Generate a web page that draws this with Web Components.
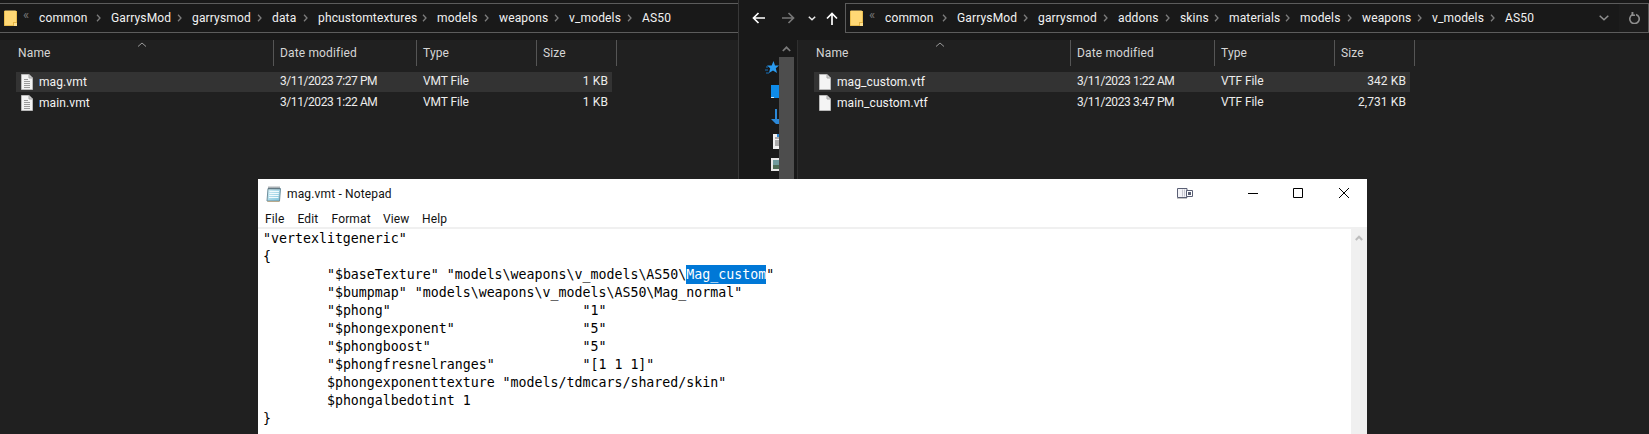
<!DOCTYPE html>
<html><head><meta charset="utf-8">
<style>
html,body{margin:0;padding:0;background:#202020;overflow:hidden}
body{width:1649px;height:434px;position:relative;font-family:Roboto,"Noto Sans",sans-serif;font-size:12px}
</style></head><body>
<desk-top>
  <explorer-window style="--x:0px;--win:738px;--start:12px;--c1:262px;--c2:143px;--c3:120px;--c4:80px;--caret:125px;">
    <crumb-bar slot="bar">
      <bread-crumb style="--w:72px">common</bread-crumb>
      <bread-crumb style="--w:81px">GarrysMod</bread-crumb>
      <bread-crumb style="--w:80px">garrysmod</bread-crumb>
      <bread-crumb style="--w:46px">data</bread-crumb>
      <bread-crumb style="--w:119px">phcustomtextures</bread-crumb>
      <bread-crumb style="--w:62px">models</bread-crumb>
      <bread-crumb style="--w:70px">weapons</bread-crumb>
      <bread-crumb style="--w:73px">v_models</bread-crumb>
      <bread-crumb last>AS50</bread-crumb>
    </crumb-bar>
    <file-row hl lines name="mag.vmt" date="3/11/2023 7:27 PM" type="VMT File" size="1 KB"></file-row>
    <file-row lines name="main.vmt" date="3/11/2023 1:22 AM" type="VMT File" size="1 KB"></file-row>
  </explorer-window>
  <explorer-window nav style="--x:738px;--win:911px;--start:12px;--c1:261px;--c2:144px;--c3:120px;--c4:80px;--caret:125px;">
    <nav-buttons slot="nav"></nav-buttons>
    <crumb-bar slot="bar" boxed>
      <bread-crumb style="--w:72px">common</bread-crumb>
      <bread-crumb style="--w:81px">GarrysMod</bread-crumb>
      <bread-crumb style="--w:80px">garrysmod</bread-crumb>
      <bread-crumb style="--w:62px">addons</bread-crumb>
      <bread-crumb style="--w:49px">skins</bread-crumb>
      <bread-crumb style="--w:71px">materials</bread-crumb>
      <bread-crumb style="--w:62px">models</bread-crumb>
      <bread-crumb style="--w:70px">weapons</bread-crumb>
      <bread-crumb style="--w:73px">v_models</bread-crumb>
      <bread-crumb last>AS50</bread-crumb>
      <addr-tools></addr-tools>
    </crumb-bar>
    <nav-pane slot="pane"></nav-pane>
    <file-row hl name="mag_custom.vtf" date="3/11/2023 1:22 AM" type="VTF File" size="342 KB"></file-row>
    <file-row name="main_custom.vtf" date="3/11/2023 3:47 PM" type="VTF File" size="2,731 KB"></file-row>
  </explorer-window>
  <notepad-window title="mag.vmt - Notepad"></notepad-window>
</desk-top>
<script>
const make=(name,html)=>customElements.define(name,class extends HTMLElement{
  constructor(){super();this.attachShadow({mode:'open'});}
  connectedCallback(){ this.shadowRoot.innerHTML=typeof html==='function'?html(this):html; }
});
const chev='<svg width="5" height="8" viewBox="0 0 5 8"><path d="M1 .8 4 4 1 7.2" fill="none" stroke="#7d7d7d" stroke-width="1.3"/></svg>';
const folder='<svg width="13" height="16" viewBox="0 0 13 16"><path d="M0 1.5 .8.5H11.5l1 1V16H.8L0 15Z" fill="#ffd875"/><path d="M.5 1v14.5h12V1" fill="none" stroke="#e9bd4f"/><path d="M9 12h4v4H9Z" fill="#e4b445"/><path d="M10 13h3v3h-3Z" fill="#ffe08e"/></svg>';

make('desk-top',`<style>:host{display:block;position:relative;width:1649px;height:434px;overflow:hidden;background:#202020;color:#fff}</style><slot></slot>`);

make('bread-crumb',h=>`<style>:host{display:inline-flex;align-items:center;justify-content:space-between;width:var(--w,auto);flex:none;color:#f2f2f2;letter-spacing:.15px;white-space:nowrap;line-height:16px}svg{margin-right:10px;flex:none}</style><span><slot></slot></span>${h.hasAttribute('last')?'':chev}`);

make('addr-tools',`<style>
:host{margin-left:auto;display:flex;align-items:center;height:28px;flex:none}
.dd{width:30px;display:flex;justify-content:center;align-items:center}
.rf{width:29px;height:28px;background:#1c1c1c;display:flex;align-items:center;justify-content:center}
</style><span class="dd"><svg width="10" height="6" viewBox="0 0 10 6"><path d="M.7.7 5 4.800 9.300.7" fill="none" stroke="#8f8f8f" stroke-width="1.500"/></svg></span><span class="rf"><svg width="12" height="12" viewBox="0 0 12 12"><path d="M4.500 2.600A4.700 4.700 0 1 0 8 2.400" fill="none" stroke="#8f8f8f" stroke-width="1.600"/><path d="M3.500 0H5.400V4H3.500Z M3.500 2.600H7V4H3.500Z" fill="#8f8f8f"/></svg></span>`);

make('crumb-bar',h=>`<style>
:host{display:flex;align-items:center;height:28px;border:solid #5c5c5c;border-width:1px 0;flex:1;min-width:0;overflow:hidden}
:host([boxed]){border-width:1px}
.ic{display:flex;margin-left:4px;flex:none}
.lq{color:#777;width:16px;flex:none;font-size:13px;margin-left:6px;line-height:10px;padding-bottom:7px}
</style><span class="ic">${folder}</span><span class="lq">«</span><slot></slot>`);

make('nav-buttons',`<style>:host{display:flex;align-items:center;width:106px;flex:none;height:30px;position:relative;padding-left:13px;box-sizing:border-box}
svg{display:block;flex:none}</style>
<svg width="13" height="12" viewBox="0 0 13 12" style="margin-right:17px"><path d="M13 6H2M6.500 1 1.500 6l5 5" fill="none" stroke="#fff" stroke-width="1.7"/></svg>
<svg width="13" height="12" viewBox="0 0 13 12" style="margin-right:13px"><path d="M0 6h11M6.500 1l5 5-5 5" fill="none" stroke="#777" stroke-width="1.7"/></svg>
<svg width="8" height="5" viewBox="0 0 8 5" style="margin-right:10px"><path d="M.8.7 4 3.800 7.200.7" fill="none" stroke="#e8e8e8" stroke-width="1.500"/></svg>
<svg width="12" height="13" viewBox="0 0 12 13"><path d="M6 13V2M1 6.500l5-5 5 5" fill="none" stroke="#fff" stroke-width="1.7"/></svg>`);

make('nav-pane',`<style>:host{display:flex;width:58px;height:100%;flex:none;background:#191919;border-right:1px solid #2f2f2f}
.rail{width:40px;overflow:hidden;display:flex;flex-direction:column;align-items:flex-end;padding-top:21px;box-sizing:border-box;flex:none}
.it{height:24.2px;flex:none;position:relative;width:14px;overflow:hidden}
.it svg{position:absolute;left:0;top:0}
.sb{width:15px;flex:none;display:flex;flex-direction:column}
.up{height:17px;display:flex;align-items:center;justify-content:center}
.th{flex:1;background:#4d4d4d}
</style>
<div class="rail">
<div class="it"><svg width="14" height="14" viewBox="0 0 14 14"><path d="M8.500 0 10 4.400l4 .2-3.200 2.600L12 12 8 9.400 4 12l1.200-4.800L2 4.600l4.700-.2Z" fill="#2a9bf0"/><path d="M0 9h3M1 6h2M1 12h3" stroke="#1670bb"/></svg></div>
<div class="it"><svg width="14" height="14" viewBox="0 0 14 14"><path d="M6 0h8v13H6Z" fill="#0f8ce9"/><path d="M6 12h3v1H6Z" fill="#cfe7fa"/></svg></div>
<div class="it"><svg width="14" height="15" viewBox="0 0 14 15"><path d="M12 0v10h2v5h-3L6 10h4V0Z" fill="#2b88d8"/></svg></div>
<div class="it"><svg width="14" height="15" viewBox="0 0 14 15"><path d="M8 0h6v15H8Z" fill="#f0f0f0"/><path d="M10 4h4M10 7h4M10 9h4M10 11h4" stroke="#666"/><path d="M12 0h2v3h-2Z" fill="#2b88d8"/></svg></div>
<div class="it"><svg width="14" height="13" viewBox="0 0 14 13"><path d="M6 0h8v13H6Z" fill="#e8e8e8"/><path d="M8 2h6v9H8Z" fill="#6f9a9c"/><path d="M8 7h6v4H8Z" fill="#4d6c55"/></svg></div>
</div>
<div class="sb"><div class="up"><svg width="9" height="6" viewBox="0 0 9 6"><path d="M.8 5 4.500 1.300 8.200 5" fill="none" stroke="#7a7a7a" stroke-width="1.700"/></svg></div><div class="th"></div></div>`);

make('file-row',h=>{const a=k=>h.getAttribute(k);return `<style>
:host{display:grid;grid-template-columns:calc(var(--c1) - 4px) var(--c2) var(--c3) calc(var(--c4) - 5px);height:20px;margin:0 0 1px 4px;width:max-content;line-height:19px;color:#ececec;white-space:nowrap;letter-spacing:.1px}
:host([hl]){background:#333}
.n{display:flex;align-items:center;gap:6px;padding-left:5px;color:#f4f4f4}
.c{padding-left:6px}.s{text-align:right;padding-right:4px}
.d{letter-spacing:-.42px}.ty{letter-spacing:-.1px}
svg{flex:none;display:block}
</style><div class="n"><svg width="12" height="16" viewBox="0 0 12 16"><path d="M.5.5H8L11.500 4V15.500H.5Z" fill="#f4f4f4" stroke="#b9b9b9"/><path d="M8 .5V4H11.500" fill="#d0d0d0" stroke="#a8a8a8"/>${h.hasAttribute('lines')?'<path d="M3 5.500H7M3 7.500H9M3 9.500H9M3 11.500H9M3 13.500H9" stroke="#9a9a9a"/>':''}</svg><span>${a('name')}</span></div><div class="c d">${a('date')}</div><div class="c ty">${a('type')}</div><div class="s">${a('size')}</div>`});

make('col-head',`<style>
:host{display:grid;grid-template-columns:var(--c1) var(--c2) var(--c3) var(--c4);height:25px;width:max-content;position:relative;color:#d6d6d6;letter-spacing:.15px}
div{border-right:1px solid #555;padding-left:6px;line-height:26px;box-sizing:border-box}
svg{position:absolute;left:var(--caret);top:2px}
</style><div>Name</div><div>Date modified</div><div>Type</div><div>Size</div><svg width="10" height="5" viewBox="0 0 10 5"><path d="M1 4.500 5 1l4 3.500" fill="none" stroke="#999" stroke-width="1"/></svg>`);

make('explorer-window',h=>`<style>
:host{position:absolute;left:var(--x);top:0;width:var(--win);height:434px;background:#202020;box-sizing:border-box;display:flex;flex-direction:column}
:host([nav]){border-left:1px solid #383838}
.tb{height:40px;background:#191919;flex:none;display:flex;align-items:flex-start;padding-top:3px;box-sizing:border-box}
.body{flex:1;display:flex;min-height:0}
.main{flex:1;padding-left:var(--start);min-width:0;display:flex;flex-direction:column}
.rows{margin-top:7px}
</style>
<div class="tb"><slot name="nav"></slot><slot name="bar"></slot></div>
<div class="body"><slot name="pane"></slot><div class="main"><col-head></col-head><div class="rows"><slot></slot></div></div></div>`);

make('notepad-window',h=>`<style>
:host{position:absolute;left:258px;top:179px;width:1109px;height:255px;background:#fff;color:#000;display:flex;flex-direction:column;overflow:hidden}
.t{height:30px;flex:none;display:flex;align-items:center;position:relative;padding-left:8px;color:#111;letter-spacing:.15px}
.t svg.app{margin-right:5px;flex:none}
.ctl{position:absolute;left:0;top:0}
.ctl svg{position:absolute}
.m{height:18px;display:flex;flex:none;padding-left:7px;line-height:20px;color:#111;letter-spacing:.15px}
.m span{width:var(--w)}
.sep{height:2px;background:#f0f0f0;flex:none}
.ed{flex:1;display:flex;min-height:0}
pre{flex:1;margin:0;padding:1px 0 0 5px;font:13.28px/18px "DejaVu Sans Mono","Liberation Mono",monospace;tab-size:8;color:#000;overflow:hidden}
mark{display:inline-block;position:relative;background:none;color:#fff;z-index:0;line-height:18px}
mark::before{content:"";position:absolute;inset:-1px 0 0;background:#0078d7;z-index:-1}
.sb{width:16px;flex:none;background:#f0f0f0;display:flex;justify-content:center;padding-top:6px;box-sizing:border-box}
</style>
<div class="t"><svg class="app" width="16" height="16" viewBox="0 0 16 16"><defs><linearGradient id="pg" x1="0" y1="0" x2="1" y2="1"><stop offset="0" stop-color="#d8f0f6"/><stop offset="1" stop-color="#7ec4dc"/></linearGradient></defs><path d="M2 2.500h12.500L13.500 15H1Z" fill="url(#pg)" stroke="#6f8f9c"/><path d="M3.500 5.500h9.500M3.300 7.500h9.500M3.100 9.500h9.500M2.900 11.500h9.500" stroke="#f2fbfd"/><path d="M3 .5v3M5 .5v3M7 .5v3M9 .5v3M11 .5v3M13 .5v3" stroke="#59656c"/><path d="M1.500 15.500h12" stroke="#b8a98c"/></svg><span>mag.vmt - Notepad</span>
<span class="ctl">
<svg style="left:919px;top:9px" width="16" height="11" viewBox="0 0 16 11"><path d="M.5.500H10V9.500H.5Z" fill="#f4f4f8" stroke="#5a5f74"/><path d="M5 1.500h1v7H5Z M7 1.500h1v7H7Z" fill="#c8c8d0"/><path d="M9.500 2.500H15.500V8.500H9.500Z" fill="#fff" stroke="#5a5f74"/><path d="M11 4h3v3h-3Z" fill="#5a5f74"/><path d="M0 10h10v1H0Z" fill="#c4c4c4"/></svg>
<svg style="left:990px;top:14px" width="10" height="1" viewBox="0 0 10 1"><path d="M0 0h10v1H0Z" fill="#000"/></svg>
<svg style="left:1035px;top:9px" width="10" height="10" viewBox="0 0 10 10"><path d="M.5.500h9v9h-9Z" fill="none" stroke="#000"/></svg>
<svg style="left:1081px;top:9px" width="10" height="10" viewBox="0 0 10 10"><path d="M0 0 10 10M10 0 0 10" stroke="#000" fill="none"/></svg>
</span></div>
<div class="m"><span style="--w:32.5px">File</span><span style="--w:34px">Edit</span><span style="--w:51.5px">Format</span><span style="--w:39px">View</span><span style="--w:40px">Help</span></div>
<div class="sep"></div>
<div class="ed"><pre>"vertexlitgeneric"
{
	"$baseTexture" "models\\weapons\\v_models\\AS50\\<mark>Mag_custom</mark>"
	"$bumpmap" "models\\weapons\\v_models\\AS50\\Mag_normal"
	"$phong"			"1"
	"$phongexponent"		"5"
	"$phongboost"			"5"
	"$phongfresnelranges"		"[1 1 1]"
	$phongexponenttexture "models/tdmcars/shared/skin"
	$phongalbedotint 1
}</pre><div class="sb"><svg width="8" height="6" viewBox="0 0 8 6"><path d="M.8 5 4 1.700 7.200 5" fill="none" stroke="#bdbdbd" stroke-width="2"/></svg></div></div>`);
</script>
</body></html>
